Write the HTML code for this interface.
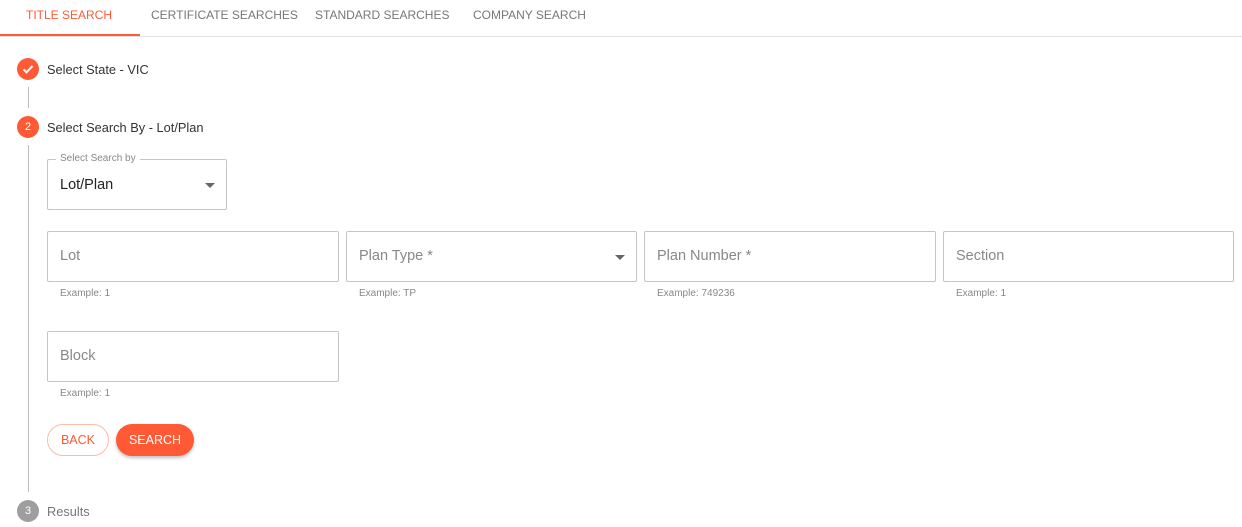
<!DOCTYPE html>
<html><head><style>
body{margin:0;width:1242px;height:527px;background:#fff;font-family:"Liberation Sans",sans-serif;position:relative;overflow:hidden;color:#333}
.a{position:absolute;white-space:nowrap}
.tab{font-size:12px;color:#777;top:8px}
.f{position:absolute;border:1px solid #c4c4c4;border-radius:2px;box-sizing:border-box;height:51px}
.f span{position:absolute;left:12px;top:16px;font-size:14.5px;color:#888}
.h{position:absolute;font-size:10px;color:#888}
.c{position:absolute;width:22px;height:22px;border-radius:50%;background:#ff5a35;color:#fff;font-size:11px;text-align:center;line-height:22px}
.lbl{font-size:12.8px;color:#333}
.arr{position:absolute;width:0;height:0;border-left:5px solid transparent;border-right:5px solid transparent;border-top:5px solid #666}
</style></head><body>
<div class="a tab" style="left:26px;color:#ff5a35">TITLE SEARCH</div>
<div class="a tab" style="left:151px">CERTIFICATE SEARCHES</div>
<div class="a tab" style="left:315px">STANDARD SEARCHES</div>
<div class="a tab" style="left:473px">COMPANY SEARCH</div>
<div class="a" style="left:0;top:36px;width:1242px;height:1px;background:#e0e0e0"></div>
<div class="a" style="left:0;top:34px;width:140px;height:2px;background:#ff5a35"></div>

<div class="c" style="left:17px;top:58px"><svg width="22" height="22" viewBox="0 0 22 22"><path d="M6.5 11.3l3 3 6-6.3" stroke="#fff" stroke-width="2" fill="none"/></svg></div>
<div class="a lbl" style="left:47px;top:62px">Select State - VIC</div>
<div class="a" style="left:28px;top:87px;width:1px;height:21px;background:#bbb"></div>
<div class="c" style="left:17px;top:116px">2</div>
<div class="a lbl" style="left:47px;top:120px">Select Search By - Lot/Plan</div>
<div class="a" style="left:28px;top:145px;width:1px;height:347px;background:#bbb"></div>

<div class="f" style="left:47px;top:159px;width:180px"><span style="color:#222;top:17px">Lot/Plan</span><div class="arr" style="left:157px;top:23px"></div></div>
<div class="a" style="left:56px;top:153px;background:#fff;padding:0 4px;font-size:10px;color:#888">Select Search by</div>

<div class="f" style="left:47px;top:231px;width:292px"><span>Lot</span></div>
<div class="f" style="left:346px;top:231px;width:291px"><span>Plan Type *</span><div class="arr" style="left:268px;top:23px"></div></div>
<div class="f" style="left:644px;top:231px;width:292px"><span>Plan Number *</span></div>
<div class="f" style="left:943px;top:231px;width:291px"><span>Section</span></div>
<div class="h" style="left:60px;top:288px">Example: 1</div>
<div class="h" style="left:359px;top:288px">Example: TP</div>
<div class="h" style="left:657px;top:288px">Example: 749236</div>
<div class="h" style="left:956px;top:288px">Example: 1</div>

<div class="f" style="left:47px;top:331px;width:292px"><span>Block</span></div>
<div class="h" style="left:60px;top:388px">Example: 1</div>

<div class="a" style="left:47px;top:424px;width:62px;height:32px;box-sizing:border-box;border:1px solid #ffb9a6;border-radius:16px;color:#ff5a35;font-size:12.5px;text-align:center;line-height:31px">BACK</div>
<div class="a" style="left:116px;top:424px;width:78px;height:32px;border-radius:16px;background:#ff5a35;color:#fff;font-size:12.5px;text-align:center;line-height:33px;box-shadow:0 2px 3px rgba(0,0,0,.25)">SEARCH</div>

<div class="c" style="left:17px;top:500px;background:#9e9e9e">3</div>
<div class="a lbl" style="left:47px;top:504px;color:#777">Results</div>
</body></html>
